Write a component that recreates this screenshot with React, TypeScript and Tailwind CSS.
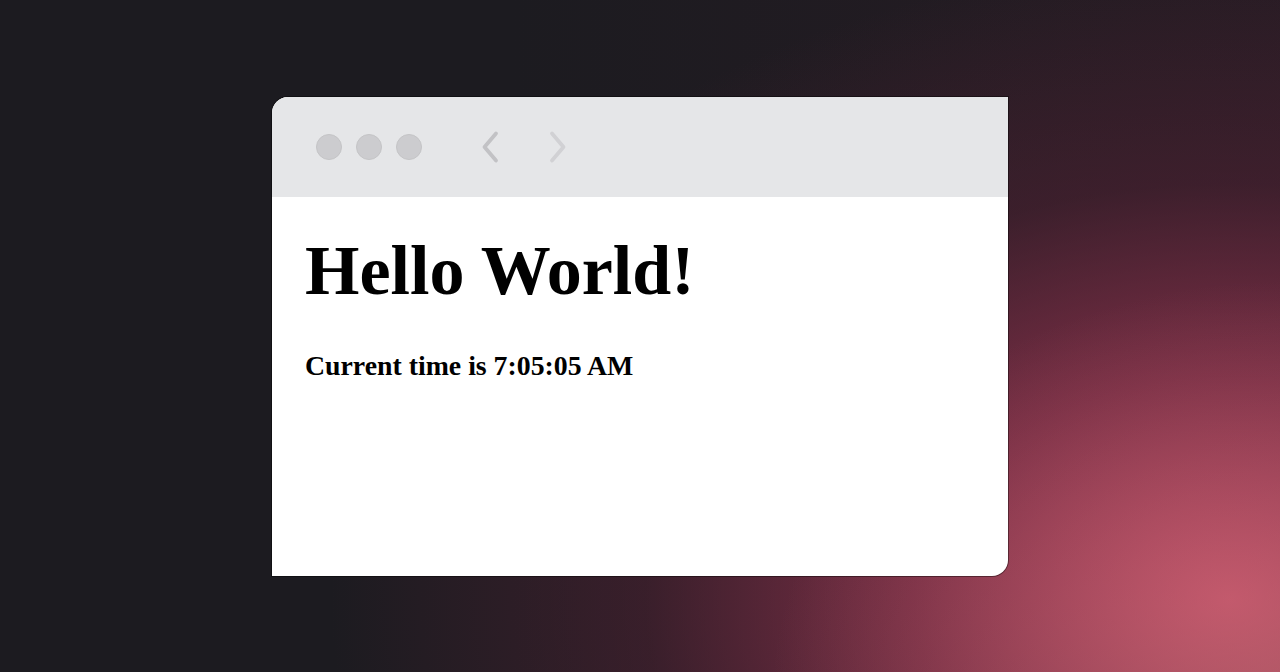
import React from "react";

export default function App() {
  return (
    <div
      className="w-[1280px] h-[672px] flex items-center justify-center overflow-hidden bg-[#1c1b20]"
      style={{
        backgroundImage:
          "radial-gradient(ellipse 520px 420px at 1290px 700px, rgba(190,110,115,0.55) 0%, rgba(190,110,115,0) 100%), radial-gradient(ellipse 900px 640px at 1230px 600px, rgba(198,76,104,1) 0%, rgba(150,52,80,0.75) 35%, rgba(90,35,55,0.45) 65%, rgba(28,27,32,0) 100%), linear-gradient(90deg, rgba(28,27,32,0) 40%, rgba(45,28,38,0.6) 100%)",
      }}
    >
      <div className="w-[736px] h-[479px] flex flex-col bg-white rounded-tl-[16px] rounded-br-[16px] overflow-hidden ring-1 ring-black/40">
        <div className="h-[100px] shrink-0 bg-[#e5e6e8] flex items-center pl-[44px]">
          <div className="flex gap-[14px]">
            <div className="w-[26px] h-[26px] rounded-full bg-[#cccccf] border border-[#c4c4c6]" />
            <div className="w-[26px] h-[26px] rounded-full bg-[#cccccf] border border-[#c4c4c6]" />
            <div className="w-[26px] h-[26px] rounded-full bg-[#cccccf] border border-[#c4c4c6]" />
          </div>
          <div className="flex items-center ml-[56px] gap-[44px]">
            <svg width="24" height="36" viewBox="0 0 24 36">
              <path d="M18 4.5 L6.5 18 L18 31.5" fill="none" stroke="#c2c2c5" strokeWidth="3.8" strokeLinecap="round" strokeLinejoin="round" />
            </svg>
            <svg width="24" height="36" viewBox="0 0 24 36">
              <path d="M6 4.5 L17.5 18 L6 31.5" fill="none" stroke="#d1d1d4" strokeWidth="3.8" strokeLinecap="round" strokeLinejoin="round" />
            </svg>
          </div>
        </div>
        <div className="flex-1 pl-[33px] pt-[39px] text-black font-['Liberation_Serif','Times_New_Roman',serif] font-bold">
          <h1 className="text-[70px] leading-none">Hello World!</h1>
          <p className="text-[27.8px] leading-none mt-[46px]">Current time is 7:05:05 AM</p>
        </div>
      </div>
    </div>
  );
}
